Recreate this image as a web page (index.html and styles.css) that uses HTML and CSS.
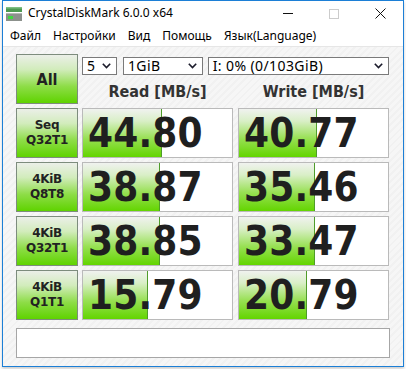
FILE: index.html
```html
<html>
 <head>
  <title>CrystalDiskMark 6.0.0 x64</title>
  <meta name='viewport' content='width=device-width,initial-scale=1.0'>
  <link rel="stylesheet" href="styles.css">
 </head>
 <body>
  <div class='window'>
   <div class='titlebar'>
    <svg class='appicon' width='16' height='14' viewBox='0 0 16 14'>
     <rect x='0' y='0' width='16' height='5' fill='#4e9a52'/>
     <rect x='0' y='0' width='16' height='1.5' fill='#7fbf83'/>
     <rect x='0' y='6' width='16' height='8' fill='#8c918c'/>
     <rect x='0' y='6' width='16' height='1' fill='#b5b9b5'/>
     <rect x='2' y='9' width='5' height='3' fill='#3fd83f'/>
    </svg>
    <span class='title'>CrystalDiskMark 6.0.0 x64</span>
    <div class='controls'>
     <span class='ctl'><i class='min'></i></span>
     <span class='ctl'><i class='max'></i></span>
     <span class='ctl'><svg width='11' height='11' viewBox='0 0 11 11'><path d='M0.5 0.5L10.5 10.5M10.5 0.5L0.5 10.5' stroke='#111' stroke-width='1' fill='none'/></svg></span>
    </div>
   </div>
   <div class='menu'>
    <span>Файл</span><span>Настройки</span><span>Вид</span><span>Помощь</span><span>Язык(Language)</span>
   </div>
   <div class='main'>
    <div class='grid'>
     <div class='btn all'>All</div>
     <div class='opts'>
      <div class='selects'>
       <div class='sel s-count'>5<svg width='9' height='6' viewBox='0 0 9 6'><path d='M0.8 0.8L4.5 4.6L8.2 0.8' stroke='#1b1b2b' stroke-width='1.6' fill='none'/></svg></div>
       <div class='sel s-size'>1GiB<svg width='9' height='6' viewBox='0 0 9 6'><path d='M0.8 0.8L4.5 4.6L8.2 0.8' stroke='#1b1b2b' stroke-width='1.6' fill='none'/></svg></div>
       <div class='sel s-drive'>I: 0% (0/103GiB)<svg width='9' height='6' viewBox='0 0 9 6'><path d='M0.8 0.8L4.5 4.6L8.2 0.8' stroke='#1b1b2b' stroke-width='1.6' fill='none'/></svg></div>
      </div>
      <div class='heads'>
       <div>Read [MB/s]</div>
       <div class='w'>Write [MB/s]</div>
      </div>
     </div>

     <div class='btn'>Seq<br>Q32T1</div>
     <div class='val'><div class='bar' style='width:79px'></div><span>44.80</span></div>
     <div class='val w'><div class='bar' style='width:78px'></div><span>40.77</span></div>

     <div class='btn'>4KiB<br>Q8T8</div>
     <div class='val'><div class='bar' style='width:77px'></div><span>38.87</span></div>
     <div class='val w'><div class='bar' style='width:76px'></div><span>35.46</span></div>

     <div class='btn'>4KiB<br>Q32T1</div>
     <div class='val'><div class='bar' style='width:77px'></div><span>38.85</span></div>
     <div class='val w'><div class='bar' style='width:76px'></div><span>33.47</span></div>

     <div class='btn'>4KiB<br>Q1T1</div>
     <div class='val'><div class='bar' style='width:65px'></div><span>15.79</span></div>
     <div class='val w'><div class='bar' style='width:68px'></div><span>20.79</span></div>
    </div>
    <div class='comment'></div>
   </div>
  </div>
 </body>
</html>
```

FILE: styles.css
```css
* {box-sizing:border-box}
body {margin:0; background:#fff; font-family:"Noto Sans", sans-serif; color:#000}
.window {margin:0 0 0 2px; width:402px; height:367px; border:1px solid #1c7fd6; background:#fff; box-shadow:0 2px 3px #0003; display:flex; flex-direction:column}

.titlebar {height:25px; display:flex; align-items:center; padding:0 0 0 3px}
.appicon {margin:1px 6px 0 0}
.title {font-size:12px; line-height:14px; margin-top:-1px}
.controls {margin-left:auto; display:flex; height:25px}
.ctl {width:46px; display:flex; align-items:center; justify-content:center}
.min {display:block; width:10px; height:1px; background:#111}
.max {display:block; width:10px; height:10px; border:1px solid #ccc}

.menu {height:21px; display:flex; gap:12px; padding:1px 0 0 7px; font-size:12px; line-height:18px; border-bottom:1px solid #e6e6e6}

.main {flex:1; padding:7px 13px 0; background:repeating-linear-gradient(135deg, #f6f6f6 0 3px, #f1f1f1 3px 5px)}
.grid {display:grid; grid-template-columns:62px 151px 152px; grid-auto-rows:50px; gap:4px}
.w {margin-left:1px}

.btn {display:flex; align-items:center; justify-content:center; text-align:center; border:1px solid #7d8c7d;
 background:linear-gradient(#ebefe8, #d2ecbc 30%, #8edd48 65%, #5fd300);
 font-family:"DejaVu Sans", sans-serif; font-weight:bold; font-size:12px; letter-spacing:-0.3px; line-height:15px; color:#222}
.all {font-family:"DejaVu Sans Condensed", "DejaVu Sans", sans-serif; font-stretch:condensed; font-size:16px; letter-spacing:0}

.opts {grid-column:2 / 4; display:flex; flex-direction:column}
.selects {display:flex; margin-top:3px; height:18px}
.sel {height:18px; background:#fff; border:1px solid #7a7a7a; display:flex; align-items:center; justify-content:space-between; padding:0 5px 0 4px; font-size:14px; letter-spacing:0.4px; line-height:16px}
.s-count {width:35px}
.s-size {width:80px; margin-left:6px}
.s-drive {width:182px; margin-left:5px}
.heads {display:grid; grid-template-columns:151px 152px; gap:4px; margin-top:7px;
 font-family:"DejaVu Sans Condensed", "DejaVu Sans", sans-serif; font-stretch:condensed; font-weight:bold; font-size:16px; line-height:20px; color:#333; text-align:center}

.val {position:relative; background:#fff; border:1px solid #bababa; display:flex; align-items:center; padding:0 0 0 5px}
.bar {position:absolute; left:0; top:0; bottom:0; border-right:1px solid #4f9c2a;
 background:linear-gradient(#f0f2ef, #d9efc7 25%, #97e052 62%, #63d500)}
.val span {position:relative; font-family:"DejaVu Sans Condensed", "DejaVu Sans", sans-serif; font-stretch:condensed; font-weight:bold; font-size:40px; line-height:44px; color:#1f1f1f; letter-spacing:0.2px}

.comment {margin-top:8px; height:30px; background:#fff; border:1px solid #a6a6a6}
```
